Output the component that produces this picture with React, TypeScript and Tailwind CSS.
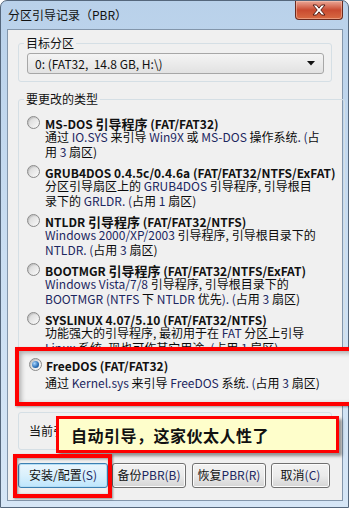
import React from "react";

type Item = {
  title: string[];
  desc: string[];
};

const items: Item[] = [
  {
    title: ["MS-DOS ", "引导程序", " (FAT/FAT32)"],
    desc: ["通过 IO.SYS 来引导 Win9X 或 MS-DOS 操作系统. (占", "用 3 扇区)"],
  },
  {
    title: ["GRUB4DOS 0.4.5c/0.4.6a (FAT/FAT32/NTFS/ExFAT)"],
    desc: ["分区引导扇区上的 GRUB4DOS 引导程序, 引导根目", "录下的 GRLDR. (占用 1 扇区)"],
  },
  {
    title: ["NTLDR ", "引导程序", " (FAT/FAT32/NTFS)"],
    desc: ["Windows 2000/XP/2003 引导程序, 引导根目录下的", "NTLDR. (占用 3 扇区)"],
  },
  {
    title: ["BOOTMGR ", "引导程序", " (FAT/FAT32/NTFS/ExFAT)"],
    desc: ["Windows Vista/7/8 引导程序, 引导根目录下的", "BOOTMGR (NTFS 下 NTLDR 优先). (占用 3 扇区)"],
  },
  {
    title: ["SYSLINUX 4.07/5.10 (FAT/FAT32/NTFS)"],
    desc: ["功能强大的引导程序, 最初用于在 FAT 分区上引导", "Linux 系统, 现也可作其它用途. (占用 1 扇区)"],
  },
];

const isCjk = (s: string) => /[\u3000-\u9fff\uff00-\uffef]/.test(s);

// latin runs render navy-ish like the cleartype text in the shot
const Mixed = ({ text }: { text: string }) => (
  <>
    {text.split(/([\x20-\x7E]+)/).map((part, i) =>
      part === "" ? null : /[A-Za-z0-9(]/.test(part) ? (
        <span key={i} className="text-[#1c2760]">
          {part}
        </span>
      ) : (
        <span key={i}>{part}</span>
      ),
    )}
  </>
);

const Radio = ({ checked }: { checked?: boolean }) => (
  <span className="flex h-[13px] w-[13px] shrink-0 items-center justify-center rounded-full border border-[#8a8a8a] bg-linear-to-br from-[#d4d4d4] to-[#fbfbfb] shadow-[inset_1px_1px_1px_rgba(0,0,0,0.12)]">
    {checked ? (
      <span className="h-[7px] w-[7px] rounded-full bg-[radial-gradient(circle_at_35%_35%,#a9d7ff,#2a6db5_60%,#154a86)]" />
    ) : null}
  </span>
);

const Title = ({ parts }: { parts: string[] }) => (
  <span className="whitespace-pre font-bold text-[#101010]">
    {parts.map((p, i) => (
      <span key={i} className={isCjk(p) ? "text-[13px]" : "text-[12px]"}>
        {p}
      </span>
    ))}
  </span>
);

const Option = ({ item }: { item: Item }) => (
  <div className="mb-[5px]">
    <div className="flex h-[15px] items-center gap-[5px] leading-[15px]">
      <Radio />
      <Title parts={item.title} />
    </div>
    <div className="pl-[18px] text-[12px] leading-[14.5px] text-[#0a0a0a]">
      {item.desc.map((line) => (
        <div key={line} className="whitespace-pre">
          <Mixed text={line} />
        </div>
      ))}
    </div>
  </div>
);

const Button = ({
  label,
  width,
  primary,
}: {
  label: string;
  width: string;
  primary?: boolean;
}) => (
  <button
    type="button"
    className={`${width} h-[25px] rounded-[3px] border text-[12px] leading-none text-[#111] ${
      primary
        ? "border-[#3c7fb1] bg-linear-to-b from-[#eaf6fd] via-[#d9f0fc] to-[#bee6fd] shadow-[inset_0_0_0_1px_#b5def5]"
        : "border-[#707070] bg-linear-to-b from-[#f2f2f2] via-[#ebebeb] to-[#d5d5d5] shadow-[inset_0_0_0_1px_#fcfcfc]"
    }`}
  >
    <Mixed text={label} />
  </button>
);

export default function App() {
  return (
    <div className="h-[508px] w-[349px] overflow-hidden font-['Noto_Sans_CJK_SC',sans-serif]">
      <div className="flex h-full flex-col rounded-t-[7px] border border-[#55677c] bg-linear-to-b from-[#b9d1ea] via-[#cadeF2] to-[#d6e6f6]">
        {/* title bar */}
        <div className="flex h-[28px] items-start justify-between pl-[7px]">
          <span className="pt-[6px] text-[12px] leading-[16px] text-[#111]">
            分区引导记录（PBR）
          </span>
          <div className="mr-[5px] flex h-[19px] w-[48px] items-center justify-center rounded-b-[4px] border border-t-0 border-[#6b2a1e] bg-linear-to-b from-[#e9a696] via-[#c94a30] to-[#d86a43] shadow-[inset_0_0_0_1px_rgba(255,210,190,0.45)]">
            <svg width="16" height="12" viewBox="0 0 16 12">
              <path
                d="M2 1h3.5L8 4.2 10.5 1H14L9.8 6 14 11h-3.5L8 7.8 5.5 11H2l4.2-5z"
                fill="#fff"
                stroke="#47130c"
                strokeWidth="0.9"
                strokeLinejoin="round"
              />
            </svg>
          </div>
        </div>

        {/* client area */}
        <div className="ml-[6px] mr-[5px] border border-[#8396ab] bg-[#f0f0f0] px-[10px] pb-[12px]">
          <fieldset className="mt-[5px] rounded-[3px] border border-[#d5dfe5] px-[8px] pb-[7px] pr-[7px]">
            <legend className="-ml-[3px] px-[2px] text-[12px] leading-[16px] text-[#111]">
              目标分区
            </legend>
            <div className="mt-[2px] flex h-[21px] items-center justify-between rounded-[3px] border border-[#a7a7a7] bg-linear-to-b from-[#f4f4f4] to-[#e2e2e2] pl-[7px] pr-[8px]">
              <span className="whitespace-pre text-[12px] text-[#111]">0: (FAT32,  14.8 GB, H:\)</span>
              <svg width="8" height="5" viewBox="0 0 8 5">
                <path d="M0 0h8L4 4.5z" fill="#111" />
              </svg>
            </div>
          </fieldset>

          <fieldset className="mt-[9px] rounded-[3px] border border-[#d5dfe5] px-[8px] pt-[8px]">
            <legend className="-ml-[3px] px-[2px] text-[12px] leading-[16px] text-[#111]">
              要更改的类型
            </legend>
            {items.map((item) => (
              <Option key={item.title.join("")} item={item} />
            ))}

            <div className="relative z-10 -mb-[4px] -ml-[12px] -mr-[20px] -mt-[13px] border-[4px] border-[#ff0000] bg-[#f2f2f2] pb-[12px] pl-[10px] pt-[6px] shadow-[inset_2px_2px_5px_rgba(0,0,0,0.3),1px_1px_2px_rgba(0,0,0,0.35)]">
              <div className="flex h-[15px] items-center gap-[4px] leading-[15px]">
                <Radio checked />
                <Title parts={["FreeDOS (FAT/FAT32)"]} />
              </div>
              <div className="mt-[3.5px] whitespace-pre pl-[16px] text-[12px] leading-[14.5px] text-[#0a0a0a]">
                <Mixed text="通过 Kernel.sys 来引导 FreeDOS 系统. (占用 3 扇区)" />
              </div>
            </div>
          </fieldset>

          <div className="relative mt-[9px] flex h-[38px] items-center rounded-[3px] border border-[#d5dfe5] pl-[10px] text-[12px] text-[#111]">
            当前引导记录: FreeDOS
            <div className="absolute left-[37px] top-[3px] flex h-[37px] w-[283px] items-center border-[3px] border-[#ff0000] bg-[#fefecb] pl-[12px] shadow-[3px_3px_3px_rgba(0,0,0,0.4)]">
              <span className="text-[16px] font-bold tracking-[0.5px] text-[#111]">
                自动引导，这家伙太人性了
              </span>
            </div>
          </div>

          <div className="mt-[11px] flex items-center">
            <div className="relative">
              <Button label="安装/配置(S)" width="w-[90px]" primary />
              <div className="pointer-events-none absolute -bottom-[10px] -left-[5px] -right-[4px] -top-[7px] border-[4px] border-[#ff0000] shadow-[inset_1px_1px_3px_rgba(0,0,0,0.4),1px_1px_2px_rgba(0,0,0,0.4)]" />
            </div>
            <div className="ml-[4px]">
              <Button label="备份PBR(B)" width="w-[74px]" />
            </div>
            <div className="ml-[6px]">
              <Button label="恢复PBR(R)" width="w-[74px]" />
            </div>
            <div className="ml-[5px]">
              <Button label="取消(C)" width="w-[59px]" />
            </div>
          </div>
        </div>
      </div>
    </div>
  );
}
